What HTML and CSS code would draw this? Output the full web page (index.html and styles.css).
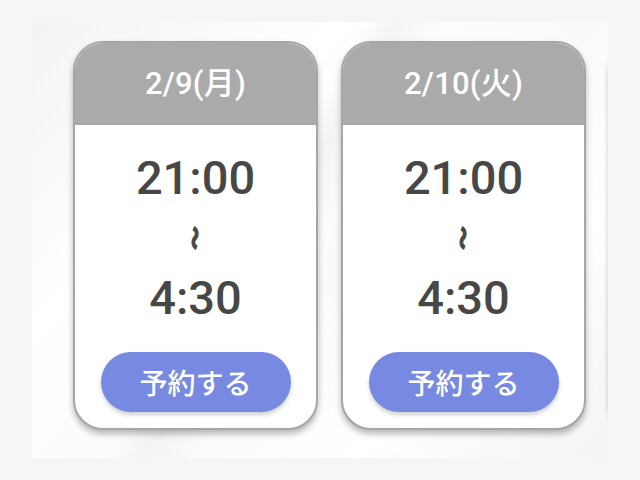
FILE: index.html
```html
<!DOCTYPE html>
<html lang="ja">
<head>
<meta charset="utf-8">
<link rel="stylesheet" href="styles.css">
</head>
<body>
<div class="panel">
  <div class="card">
    <div class="card-head">2/9(月)</div>
    <div class="card-body">
      <div class="time">21:00</div>
      <div class="wave"><span>〜</span></div>
      <div class="time">4:30</div>
      <div class="btn">予約する</div>
    </div>
  </div>
  <div class="card">
    <div class="card-head">2/10(火)</div>
    <div class="card-body">
      <div class="time">21:00</div>
      <div class="wave"><span>〜</span></div>
      <div class="time">4:30</div>
      <div class="btn">予約する</div>
    </div>
  </div>
  <div class="card card-peek"></div>
</div>
</body>
</html>
```
FILE: styles.css
```css
html, body {
  margin: 0;
  padding: 0;
}
body {
  background: #f6f6f6;
  width: 640px;
  height: 480px;
  overflow: hidden;
  font-family: Roboto, "Noto Sans CJK JP", sans-serif;
}
.panel {
  margin: 22px 0 0 32px;
  width: 576px;
  height: 436px;
  box-sizing: border-box;
  padding: 19px 0 0 41px;
  display: flex;
  gap: 23px;
  overflow: hidden;
  background:
    linear-gradient(120deg, rgba(255,255,255,0) 0%, rgba(255,255,255,0) 40%, rgba(240,240,240,0.7) 44%, rgba(255,255,255,0) 50%, rgba(255,255,255,0) 100%),
    linear-gradient(135deg, #f3f3f3 0%, #ffffff 30%, #fafafa 55%, #ffffff 75%, #f4f4f4 100%);
}
.card {
  flex: 0 0 245px;
  height: 389px;
  box-sizing: border-box;
  border: 2px solid #a6a6a6;
  border-radius: 30px;
  background: #fff;
  overflow: hidden;
  box-shadow: 0 4px 6px rgba(0,0,0,0.28);
  display: flex;
  flex-direction: column;
}
.card-peek {
  background: #fafafa;
}
.card-head {
  margin: -2px -2px 0;
  padding-bottom: 6px;
  box-sizing: border-box;
  height: 84px;
  background: #aaaaaa;
  color: #fff;
  font-size: 31px;
  font-weight: 500;
  display: flex;
  align-items: center;
  justify-content: center;
  letter-spacing: 0.2px;
}
.card-body {
  display: flex;
  flex-direction: column;
  align-items: center;
  padding-top: 23px;
}
.time {
  font-size: 47px;
  line-height: 60px;
  height: 60px;
  font-weight: 500;
  color: #474747;
}
.wave {
  height: 60px;
  display: flex;
  align-items: center;
  justify-content: center;
  color: #474747;
  font-family: "Noto Sans CJK JP", sans-serif;
  font-weight: 900;
  font-size: 30px;
}
.wave span {
  display: inline-block;
  -webkit-text-stroke: 1.6px #474747;
  transform: rotate(90deg) scale(0.8, 0.6);
}
.btn {
  margin-top: 24px;
  width: 190px;
  height: 60px;
  border-radius: 30px;
  background: #7789e1;
  color: #fff;
  font-family: "Noto Sans CJK JP", sans-serif;
  font-weight: 500;
  font-size: 28px;
  display: flex;
  align-items: center;
  justify-content: center;
  box-shadow: 0 3px 4px rgba(0,0,0,0.18);
}
```
